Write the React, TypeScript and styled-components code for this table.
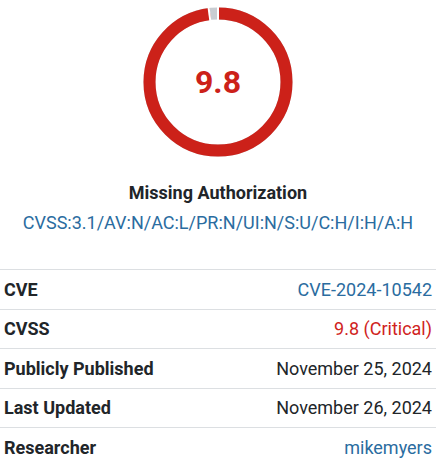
import styled, { createGlobalStyle } from "styled-components";

const GlobalStyle = createGlobalStyle`
  body {
    margin: 0;
    background: #fff;
    font-family: Roboto, "Liberation Sans", sans-serif;
    color: #212529;
  }
`;

const SIZE = 150;
const STROKE = 12;
const R = (SIZE - STROKE) / 2 - 0.5;
const C = SIZE / 2;

const ScoreRing = ({ score }: { score: number }) => {
  const circ = 2 * Math.PI * R;
  const filled = (score / 10) * circ;
  const remAngle = (score / 10) * 2 * Math.PI;
  const sep = (a: number) => {
    const x1 = C + (R - STROKE / 2 - 1) * Math.sin(a);
    const y1 = C - (R - STROKE / 2 - 1) * Math.cos(a);
    const x2 = C + (R + STROKE / 2 + 1) * Math.sin(a);
    const y2 = C - (R + STROKE / 2 + 1) * Math.cos(a);
    return <line x1={x1} y1={y1} x2={x2} y2={y2} stroke="#fff" strokeWidth={2} />;
  };
  return (
    <RingWrap>
      <svg width={SIZE} height={SIZE} viewBox={`0 0 ${SIZE} ${SIZE}`}>
        <g transform={`rotate(-90 ${C} ${C})`}>
          <circle cx={C} cy={C} r={R} fill="none" stroke="#c9cdd2" strokeWidth={STROKE} />
          <circle
            cx={C}
            cy={C}
            r={R}
            fill="none"
            stroke="#cc2119"
            strokeWidth={STROKE}
            strokeDasharray={`${filled} ${circ}`}
          />
        </g>
        {sep(0)}
        {sep(remAngle)}
      </svg>
      <Score>{score.toFixed(1)}</Score>
    </RingWrap>
  );
};

const rows = [
  { label: "CVE", value: "CVE-2024-10542", tone: "link" },
  { label: "CVSS", value: "9.8 (Critical)", tone: "danger" },
  { label: "Publicly Published", value: "November 25, 2024", tone: "plain" },
  { label: "Last Updated", value: "November 26, 2024", tone: "plain" },
  { label: "Researcher", value: "mikemyers", tone: "link" },
] as const;

export default function App() {
  return (
    <>
      <GlobalStyle />
      <Page>
        <Summary>
          <ScoreRing score={9.8} />
          <Title>Missing Authorization</Title>
          <Vector href="#">CVSS:3.1/AV:N/AC:L/PR:N/UI:N/S:U/C:H/I:H/A:H</Vector>
        </Summary>
        <Table>
          <tbody>
            {rows.map((row) => (
              <Row key={row.label}>
                <Label>{row.label}</Label>
                <Value $tone={row.tone}>{row.value}</Value>
              </Row>
            ))}
          </tbody>
        </Table>
      </Page>
    </>
  );
}

const Page = styled.div`
  width: 436px;
`;

const Summary = styled.div`
  display: flex;
  flex-direction: column;
  align-items: center;
  padding-top: 7px;
  padding-bottom: 34px;
`;

const RingWrap = styled.div`
  position: relative;
  width: 150px;
  height: 150px;

  svg {
    display: block;
  }
`;

const Score = styled.div`
  position: absolute;
  inset: 0;
  display: flex;
  align-items: center;
  justify-content: center;
  font-size: 32px;
  font-weight: 700;
  color: #cc2119;
`;

const Title = styled.div`
  margin-top: 24px;
  font-size: 18px;
  font-weight: 700;
  line-height: 24px;
  color: #212529;
`;

const Vector = styled.a`
  margin-top: 6px;
  font-size: 18px;
  line-height: 24px;
  color: #2a6ca0;
  text-decoration: none;
`;

const Table = styled.table`
  width: 100%;
  border-collapse: collapse;
`;

const Row = styled.tr`
  border-top: 1px solid #dcdfe2;
`;

const Label = styled.td`
  height: 38.5px;
  padding: 0 4px;
  font-size: 18px;
  font-weight: 700;
  color: #212529;
`;

const Value = styled.td<{ $tone: "link" | "danger" | "plain" }>`
  padding: 0 4px;
  text-align: right;
  font-size: 18px;
  color: ${(p) =>
    p.$tone === "link" ? "#2a6ca0" : p.$tone === "danger" ? "#d0231d" : "#212529"};
`;
